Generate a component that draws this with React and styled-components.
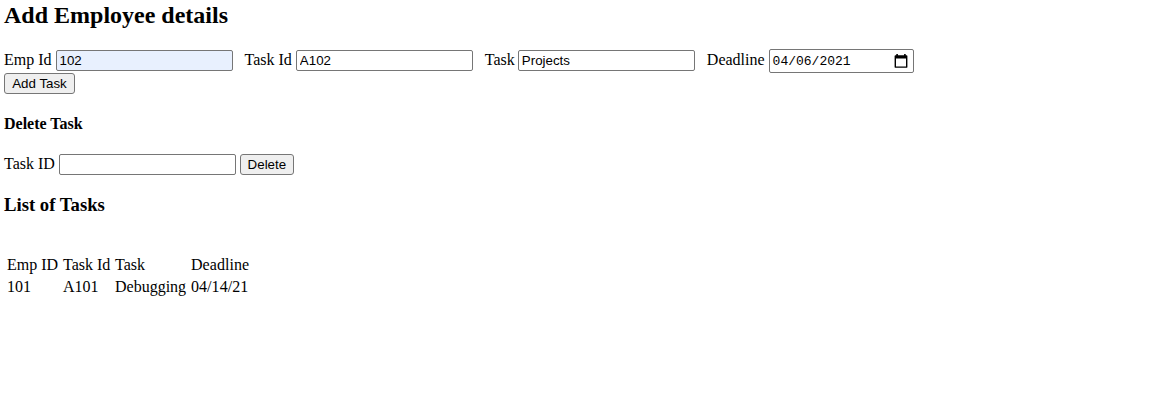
import React from 'react';
import styled, { createGlobalStyle } from 'styled-components';

const GlobalStyle = createGlobalStyle`
  body {
    margin: 0;
    background: #fff;
    color: #000;
    font: 16px/18px "Liberation Serif", "Times New Roman", serif;
  }
`;

const Page = styled.main`
  padding: 2px 4px 0;
  display: flex;
  flex-direction: column;
  align-items: flex-start;
`;

const Title = styled.h2`
  margin: 0;
  font-size: 24px;
  line-height: 27px;
`;

const Subtitle = styled.h4`
  margin: 21px 0 20px;
  font-size: 16px;
  line-height: 18px;
`;

const ListTitle = styled.h3`
  margin: 17px 0 37px;
  font-size: 18.72px;
  line-height: 22px;
`;

const Row = styled.div`
  display: flex;
  align-items: flex-start;
  height: 24px;
  margin-top: ${(p) => p.$top || 0}px;
`;

const Field = styled.label`
  display: flex;
  align-items: flex-start;
  gap: ${(p) => p.$labelGap || 4}px;
  margin-right: ${(p) => p.$gap || 0}px;
  white-space: nowrap;
`;

const Caption = styled.span`
  padding-top: 2px;
`;

const Input = styled.input`
  box-sizing: border-box;
  width: 177px;
  height: 21px;
  margin: 1px 0 0;
  padding: 1px 2px 1px 3px;
  border: 1px solid #767676;
  border-radius: 2px;
  outline: none;
  background: ${(p) => (p.$filled ? '#e8f0fe' : '#fff')};
  color: #000;
  font: 13.333px "Liberation Sans", Arial, sans-serif;
`;

const DateBox = styled.span`
  box-sizing: border-box;
  display: flex;
  align-items: center;
  justify-content: space-between;
  width: 145px;
  height: 24px;
  padding: 0 5px 0 3px;
  border: 1px solid #767676;
  border-radius: 2px;
  font: 13px "Liberation Mono", "Courier New", monospace;
`;

const Button = styled.button`
  box-sizing: border-box;
  width: ${(p) => p.$width}px;
  height: 21px;
  margin: ${(p) => p.$top || 0}px 0 0;
  padding: 0;
  border: 1px solid #767676;
  border-radius: 3px;
  background: #efefef;
  color: #000;
  font: 13.333px "Liberation Sans", Arial, sans-serif;
`;

const Table = styled.table`
  border-collapse: separate;
  border-spacing: 2px;
  table-layout: fixed;
  width: 250px;

  td {
    padding: 1px;
    height: 18px;
    white-space: nowrap;
  }

  td:nth-child(1) { width: 52px; }
  td:nth-child(2) { width: 48px; }
  td:nth-child(3) { width: 72px; }
  td:nth-child(4) { letter-spacing: 0.05px; }
`;

const rows = [
  ['Emp ID', 'Task Id', 'Task', 'Deadline'],
  ['101', 'A101', 'Debugging', '04/14/21'],
];

function CalendarIcon() {
  return (
    <svg width="14" height="14" viewBox="0 0 14 14" aria-hidden="true">
      <path
        fillRule="evenodd"
        d="M2.3 0h1.6v1.2h6.2V0h1.6v1.2h.8c.5 0 .9.4.9.9v10.8c0 .5-.4.9-.9.9h-11c-.5 0-.9-.4-.9-.9V2.1c0-.5.4-.9.9-.9h.8zM2 4.6v7.9h10V4.6z"
      />
    </svg>
  );
}

export default function App() {
  return (
    <>
      <GlobalStyle />
      <Page>
        <Title>Add Employee details</Title>
        <Row $top={20}>
          <Field $gap={12}><Caption>Emp Id</Caption><Input $filled defaultValue="102" /></Field>
          <Field $gap={12}><Caption>Task Id</Caption><Input defaultValue="A102" /></Field>
          <Field $gap={12} $labelGap={3}><Caption>Task</Caption><Input defaultValue="Projects" /></Field>
          <Field><Caption>Deadline</Caption><DateBox>04/06/2021<CalendarIcon /></DateBox></Field>
        </Row>
        <Button $width={71}>Add Task</Button>
        <Subtitle>Delete Task</Subtitle>
        <Row>
          <Field $gap={4}><Caption>Task ID</Caption><Input aria-label="Task ID" /></Field>
          <Button $width={54} $top={1}>Delete</Button>
        </Row>
        <ListTitle>List of Tasks</ListTitle>
        <Table>
          <tbody>
            {rows.map((row) => (
              <tr key={row[0]}>{row.map((cell) => <td key={cell}>{cell}</td>)}</tr>
            ))}
          </tbody>
        </Table>
      </Page>
    </>
  );
}
